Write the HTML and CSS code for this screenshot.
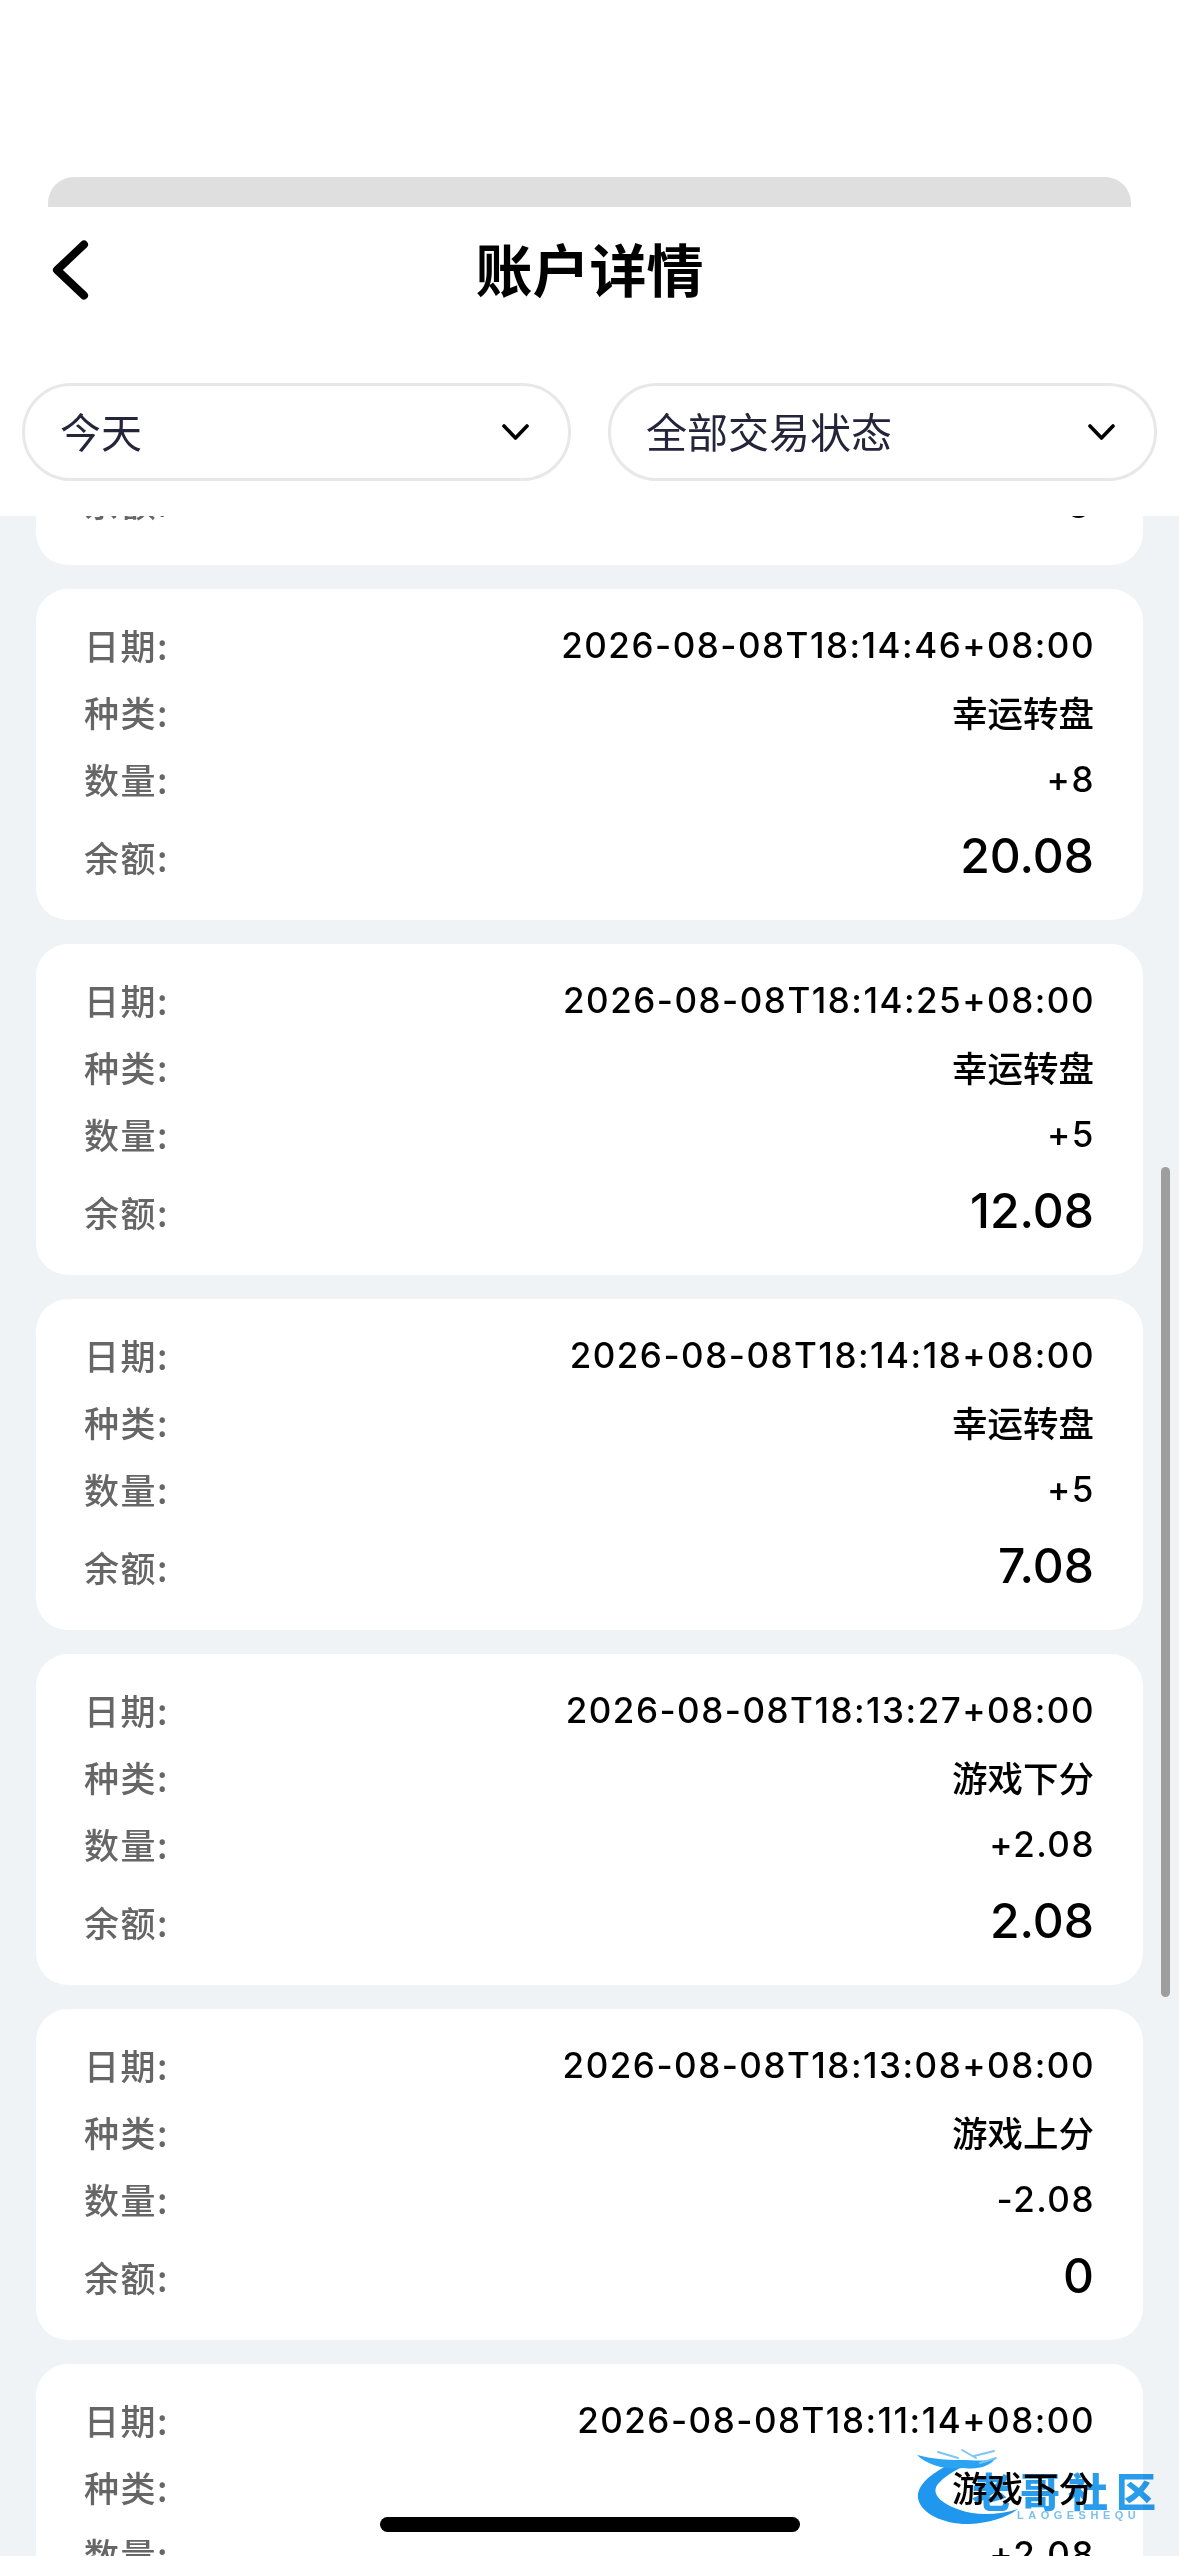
FILE: index.html
```html
<!DOCTYPE html>
<html lang="zh-CN">
<head>
<meta charset="utf-8">
<title>账户详情</title>
<link rel="stylesheet" href="styles.css">
</head>
<body>
<div class="page">
  <main class="list">
    <article class="card">
      <div class="row"><span class="label">日期:</span><span class="value num">2026-08-08T18:14:52+08:00</span></div>
      <div class="row"><span class="label">种类:</span><span class="value">幸运转盘</span></div>
      <div class="row"><span class="label">数量:</span><span class="value num">-20.08</span></div>
      <div class="row balance"><span class="label">余额:</span><span class="amount">0</span></div>
    </article>
    <article class="card">
      <div class="row"><span class="label">日期:</span><span class="value num">2026-08-08T18:14:46+08:00</span></div>
      <div class="row"><span class="label">种类:</span><span class="value">幸运转盘</span></div>
      <div class="row"><span class="label">数量:</span><span class="value num">+8</span></div>
      <div class="row balance"><span class="label">余额:</span><span class="amount">20.08</span></div>
    </article>
    <article class="card">
      <div class="row"><span class="label">日期:</span><span class="value num">2026-08-08T18:14:25+08:00</span></div>
      <div class="row"><span class="label">种类:</span><span class="value">幸运转盘</span></div>
      <div class="row"><span class="label">数量:</span><span class="value num">+5</span></div>
      <div class="row balance"><span class="label">余额:</span><span class="amount">12.08</span></div>
    </article>
    <article class="card">
      <div class="row"><span class="label">日期:</span><span class="value num">2026-08-08T18:14:18+08:00</span></div>
      <div class="row"><span class="label">种类:</span><span class="value">幸运转盘</span></div>
      <div class="row"><span class="label">数量:</span><span class="value num">+5</span></div>
      <div class="row balance"><span class="label">余额:</span><span class="amount">7.08</span></div>
    </article>
    <article class="card">
      <div class="row"><span class="label">日期:</span><span class="value num">2026-08-08T18:13:27+08:00</span></div>
      <div class="row"><span class="label">种类:</span><span class="value">游戏下分</span></div>
      <div class="row"><span class="label">数量:</span><span class="value num">+2.08</span></div>
      <div class="row balance"><span class="label">余额:</span><span class="amount">2.08</span></div>
    </article>
    <article class="card">
      <div class="row"><span class="label">日期:</span><span class="value num">2026-08-08T18:13:08+08:00</span></div>
      <div class="row"><span class="label">种类:</span><span class="value">游戏上分</span></div>
      <div class="row"><span class="label">数量:</span><span class="value num">-2.08</span></div>
      <div class="row balance"><span class="label">余额:</span><span class="amount">0</span></div>
    </article>
    <article class="card">
      <div class="row"><span class="label">日期:</span><span class="value num">2026-08-08T18:11:14+08:00</span></div>
      <div class="row"><span class="label">种类:</span><span class="value">游戏下分</span></div>
      <div class="row"><span class="label">数量:</span><span class="value num">+2.08</span></div>
    </article>
  </main>

  <header class="header">
    <div class="sheet-tab"></div>
    <nav class="nav">
      <svg class="back" viewBox="0 0 37 60" width="37" height="60" aria-hidden="true">
        <path d="M32 4.500 L5 30 L32 55.500" fill="none" stroke="#000" stroke-width="8" stroke-linecap="round" stroke-linejoin="round"/>
      </svg>
      <h1 class="title">账户详情</h1>
    </nav>
    <div class="filters">
      <div class="select">
        <span class="select-text">今天</span>
        <svg class="caret" viewBox="0 0 27 16" width="27" height="16" aria-hidden="true"><path d="M2 2 L13.500 14 L25 2" fill="none" stroke="#000" stroke-width="3.600" stroke-linecap="round" stroke-linejoin="round"/></svg>
      </div>
      <div class="select">
        <span class="select-text">全部交易状态</span>
        <svg class="caret" viewBox="0 0 27 16" width="27" height="16" aria-hidden="true"><path d="M2 2 L13.500 14 L25 2" fill="none" stroke="#000" stroke-width="3.600" stroke-linecap="round" stroke-linejoin="round"/></svg>
      </div>
    </div>
  </header>

  <div class="scrollbar"></div>
  <div class="home-indicator"></div>

  <div class="watermark">
    <svg class="dragon" viewBox="0 0 130 80" width="130" height="80" aria-hidden="true">
      <path d="M30 16 C12 26 1 36 2 48 C4 64 30 75 54 74 C72 73 90 68 102 59 C84 65 60 66 44 60 C26 54 14 44 22 34 C28 27 36 22 44 18 Z" fill="#1f97ee"/>
      <path d="M1 5 C16 9 30 10 44 10 C58 10 70 12 80 8 C74 16 62 20 48 18 C32 20 12 16 1 5 Z" fill="#2ba3f3"/>
      <path d="M22 2 L42 8 M58 6 L78 1 M64 13 L80 8 M46 0 L60 8" stroke="#7cc6f6" stroke-width="2" stroke-linecap="round" fill="none"/>
    </svg>
    <span class="wm-title">老哥社区</span>
    <span class="wm-sub">LAOGESHEQU</span>
  </div>
</div>
</body>
</html>
```
FILE: styles.css
```css
* { box-sizing: border-box; }
html, body { margin: 0; padding: 0; }
body {
  font-family: Inter, "Noto Sans CJK SC", "Noto Sans", sans-serif;
  background: #eff3f6;
}
.page {
  position: relative;
  width: 1179px;
  height: 2556px;
  overflow: hidden;
  background: #eff3f6;
}

/* scrolling list sits under the fixed header */
.list {
  display: flex;
  flex-direction: column;
  gap: 24px;
  padding: 234px 36px 0;
}
.card {
  flex: none;
  height: 331px;
  padding: 22px 49px 20px;
  background: #fff;
  border-radius: 32px;
}
.row {
  display: flex;
  align-items: center;
  justify-content: space-between;
  height: 67px;
}
.row.balance { height: 88px; }
.label {
  font-size: 35px;
  font-weight: 500;
  letter-spacing: 1.500px;
  margin-left: -1px;
  color: #666;
  font-family: "Noto Sans CJK SC", sans-serif;
}
.value {
  font-size: 35.500px;
  font-weight: 500;
  color: #000;
}
.value.num {
  font-size: 35px;
  letter-spacing: 1.500px;
  margin-right: -1px;
  padding-top: 1px;
}
.amount {
  font-size: 48px;
  font-weight: 500;
  margin-bottom: 2px;
  color: #000;
}

/* fixed header */
.header {
  position: absolute;
  top: 0;
  left: 0;
  width: 100%;
  height: 516px;
  padding-top: 177px;
  background: #fff;
}
.sheet-tab {
  height: 30px;
  margin: 0 48px;
  background: #dfdfdf;
  border-radius: 26px 26px 0 0;
}
.nav {
  display: grid;
  grid-template-columns: 1fr auto 1fr;
  align-items: center;
  height: 126px;
  padding: 0 52px;
}
.back { display: block; }
.title {
  margin: 0 0 6px;
  font-family: "Noto Sans CJK SC", sans-serif;
  font-size: 57px;
  font-weight: 700;
  line-height: 1;
  color: #000;
}
.filters {
  display: flex;
  gap: 37px;
  margin-top: 50px;
  padding: 0 22px;
}
.select {
  flex: 1;
  display: flex;
  align-items: center;
  justify-content: space-between;
  height: 98px;
  padding: 0 39px 0 35px;
  background: #fff;
  border: 3px solid #e8e8e8;
  border-radius: 49px;
}
.select-text {
  font-family: "Noto Sans CJK SC", sans-serif;
  font-size: 41px;
  line-height: 1;
  margin-bottom: 3px;
  color: #24243a;
}
.caret { display: block; }

/* overlays */
.scrollbar {
  position: absolute;
  left: 1161px;
  top: 1167px;
  width: 9px;
  height: 830px;
  background: #9e9e9e;
  border-radius: 5px;
}
.home-indicator {
  position: absolute;
  left: 380px;
  top: 2517px;
  width: 420px;
  height: 15px;
  background: #000;
  border-radius: 8px;
}
.watermark {
  position: absolute;
  left: 916px;
  top: 2450px;
  width: 250px;
  height: 80px;
  filter: blur(0.7px);
  mix-blend-mode: multiply;
}
.dragon {
  position: absolute;
  left: 0;
  top: 0;
  overflow: visible;
}
.wm-title {
  position: absolute;
  left: 56px;
  top: 15px;
  font-family: "Noto Sans CJK SC", sans-serif;
  font-size: 40px;
  font-weight: 900;
  line-height: 50px;
  letter-spacing: 8px;
  white-space: nowrap;
  color: #2a9cec;
}
.wm-sub {
  position: absolute;
  left: 101px;
  top: 60px;
  font-family: "Liberation Sans", sans-serif;
  font-size: 11px;
  font-weight: 700;
  line-height: 10px;
  letter-spacing: 4.500px;
  white-space: nowrap;
  color: #7cc0ee;
}
```
